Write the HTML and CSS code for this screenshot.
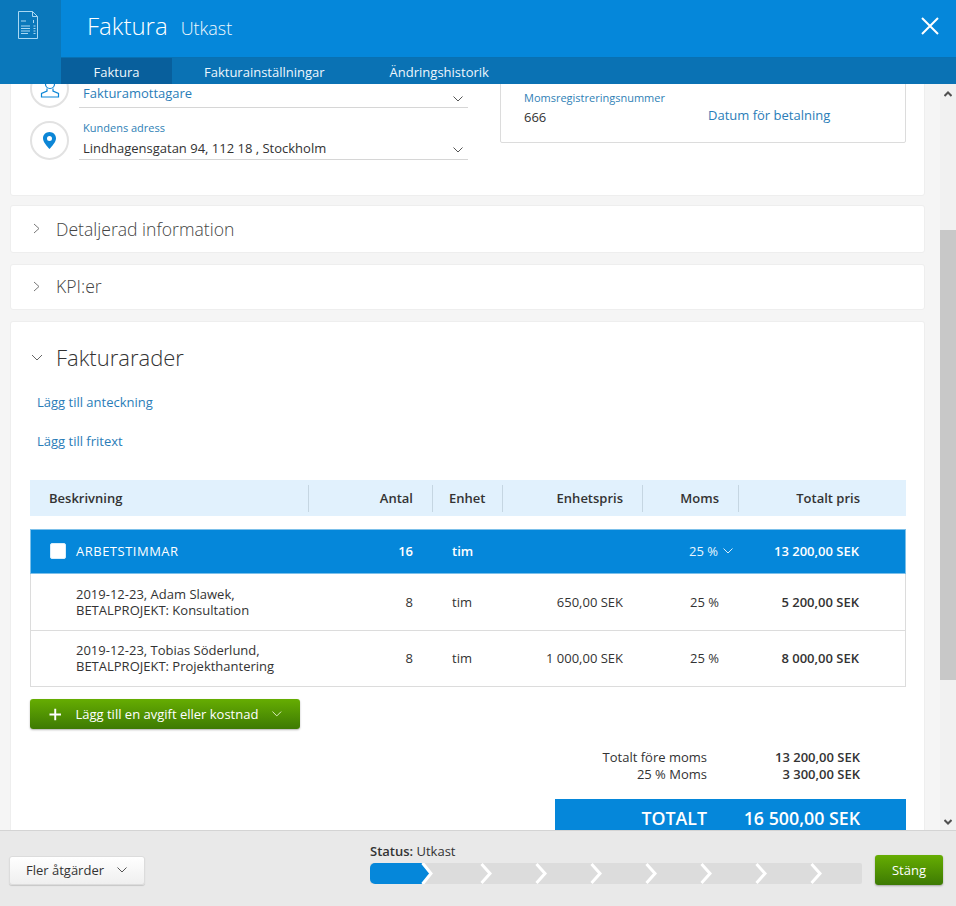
FILE: index.html
```html
<!DOCTYPE html>
<html lang="sv">
<head>
<meta charset="utf-8">
<title>Faktura</title>
<link rel="stylesheet" href="styles.css">
</head>
<body>
<div class="app">
  <header class="header">
    <div class="logo-cell">
      <svg class="doc-icon" width="22" height="30" viewBox="0 0 22 30" fill="none" stroke="#a9d8f3" stroke-width="1">
        <path d="M1.500 1.500H15.500L20.500 6.500V28.500H1.500Z"/>
        <path d="M15.500 1.500V6.500H20.500"/>
        <path d="M4 11H9M4 16H13M4 18.500H13M4 21H13M4 23.500H11M16.500 10V13M16.500 16H18.500M16.500 18.500H18.500M16.500 21H18.500M16.500 23.500H18.500"/>
      </svg>
    </div>
    <div class="header-main">
      <div class="title-row">
        <h1 class="title">Faktura</h1>
        <span class="subtitle">Utkast</span>
        <svg class="close" width="20" height="20" viewBox="0 0 20 20" stroke="#fff" stroke-width="2" fill="none"><path d="M2 2L18 18M18 2L2 18"/></svg>
      </div>
      <nav class="tabs">
        <a class="tab tab-active">Faktura</a>
        <a class="tab tab-mid">Fakturainställningar</a>
        <a class="tab tab-last">Ändringshistorik</a>
      </nav>
    </div>
  </header>

  <div class="middle">
    <main class="content">
      <section class="card card-first">
        <div class="customer">
          <div class="field-row">
            <span class="circle">
              <svg width="20" height="22" viewBox="0 0 20 22" fill="none" stroke="#0c86d6" stroke-width="1.200"><circle cx="10" cy="6" r="4.500"/><path d="M7 10.500V13L1.500 15.500V19H18.500V15.500L13 13V10.500"/></svg>
            </span>
            <div class="field">
              <div class="select-line select-plain"><span class="link-text">Fakturamottagare</span><svg class="chev" width="10" height="6" viewBox="0 0 10 6" fill="none" stroke="#555" stroke-width="1"><path d="M.5 .5L5 5L9.500 .5"/></svg></div>
            </div>
          </div>
          <div class="field-row field-row-2">
            <span class="circle">
              <svg width="13" height="17" viewBox="0 0 13 17"><path fill="#0c86d6" fill-rule="evenodd" d="M6.500 0C10.100 0 13 2.800 13 6.300C13 10.300 8.800 14.300 6.500 17C4.200 14.300 0 10.300 0 6.300C0 2.800 2.900 0 6.500 0ZM6.500 3.900A2.500 2.500 0 1 0 6.500 8.900A2.500 2.500 0 1 0 6.500 3.900Z"/></svg>
            </span>
            <div class="field">
              <div class="small-label field-label">Kundens adress</div>
              <div class="select-line"><span>Lindhagensgatan 94, 112 18 , Stockholm</span><svg class="chev" width="10" height="6" viewBox="0 0 10 6" fill="none" stroke="#555" stroke-width="1"><path d="M.5 .5L5 5L9.500 .5"/></svg></div>
            </div>
          </div>
        </div>
        <div class="info-box">
          <div class="vat">
            <div class="small-label">Momsregistreringsnummer</div>
            <div class="vat-value">666</div>
          </div>
          <a class="link-text pay-link">Datum för betalning</a>
        </div>
      </section>

      <section class="card card-collapsed card-details">
        <svg class="side-chev" width="7" height="11" viewBox="0 0 7 11" fill="none" stroke="#777" stroke-width="1"><path d="M1 1L6 5.500L1 10"/></svg>
        <h2 class="card-title">Detaljerad information</h2>
      </section>
      <section class="card card-collapsed card-kpi">
        <svg class="side-chev" width="7" height="11" viewBox="0 0 7 11" fill="none" stroke="#777" stroke-width="1"><path d="M1 1L6 5.500L1 10"/></svg>
        <h2 class="card-title">KPI:er</h2>
      </section>

      <section class="card card-lines">
        <div class="lines-head">
          <svg width="12" height="7" viewBox="0 0 12 7" fill="none" stroke="#666" stroke-width="1"><path d="M1 1L6 6L11 1"/></svg>
          <h2 class="lines-title">Fakturarader</h2>
        </div>
        <a class="link-text add-link add-link-1">Lägg till anteckning</a>
        <a class="link-text add-link add-link-2">Lägg till fritext</a>

        <div class="thead row-grid">
          <div class="th"><span class="th-in left">Beskrivning</span></div>
          <div class="th sep"><span class="th-in right">Antal</span></div>
          <div class="th sep"><span class="th-in enh">Enhet</span></div>
          <div class="th sep"><span class="th-in right">Enhetspris</span></div>
          <div class="th sep"><span class="th-in right">Moms</span></div>
          <div class="th sep"><span class="th-in total">Totalt pris</span></div>
        </div>

        <div class="group row-grid">
          <div class="cell desc-group"><span class="checkbox"></span><span class="group-name">ARBETSTIMMAR</span></div>
          <div class="cell num strong">16</div>
          <div class="cell unit strong">tim</div>
          <div class="cell"></div>
          <div class="cell vat-select">25 %<svg width="10" height="6" viewBox="0 0 10 6" fill="none" stroke="#d9eefb" stroke-width="1"><path d="M.5 .5L5 5L9.500 .5"/></svg></div>
          <div class="cell total strong">13 200,00 SEK</div>
        </div>

        <div class="line row-grid">
          <div class="cell desc">2019-12-23, Adam Slawek,<br>BETALPROJEKT: Konsultation</div>
          <div class="cell num">8</div>
          <div class="cell unit">tim</div>
          <div class="cell num">650,00 SEK</div>
          <div class="cell num">25 %</div>
          <div class="cell total strong">5 200,00 SEK</div>
        </div>
        <div class="line row-grid">
          <div class="cell desc">2019-12-23, Tobias Söderlund,<br>BETALPROJEKT: Projekthantering</div>
          <div class="cell num">8</div>
          <div class="cell unit">tim</div>
          <div class="cell num">1 000,00 SEK</div>
          <div class="cell num">25 %</div>
          <div class="cell total strong">8 000,00 SEK</div>
        </div>

        <button class="btn-green btn-add">
          <svg width="13" height="13" viewBox="0 0 13 13" stroke="#fff" stroke-width="2"><path d="M6.500 .5V12.500M.5 6.500H12.500"/></svg>
          <span>Lägg till en avgift eller kostnad</span>
          <svg width="10" height="6" viewBox="0 0 10 6" fill="none" stroke="#e4f2c8" stroke-width="1"><path d="M.5 .5L5 5L9.500 .5"/></svg>
        </button>

        <div class="sums">
          <div class="sum-row"><span class="sum-label">Totalt före moms</span><span class="sum-value">13 200,00 SEK</span></div>
          <div class="sum-row"><span class="sum-label">25 % Moms</span><span class="sum-value">3 300,00 SEK</span></div>
        </div>
        <div class="grand">
          <span class="grand-label">TOTALT</span><span class="grand-value">16 500,00 SEK</span>
        </div>
      </section>
    </main>

    <aside class="scrollbar">
      <svg class="arrow arrow-up" width="8" height="6" viewBox="0 0 8 6" fill="none" stroke="#505050" stroke-width="2"><path d="M.5 5L4 1.500L7.500 5"/></svg>
      <div class="thumb"></div>
      <svg class="arrow arrow-down" width="8" height="6" viewBox="0 0 8 6" fill="none" stroke="#505050" stroke-width="2"><path d="M.5 1L4 4.500L7.500 1"/></svg>
    </aside>
  </div>

  <footer class="footer">
    <button class="btn-more"><span>Fler åtgärder</span><svg width="10" height="6" viewBox="0 0 10 6" fill="none" stroke="#555" stroke-width="1"><path d="M.5 .5L5 5L9.500 .5"/></svg></button>
    <div class="status">
      <div class="status-text"><b>Status:</b> Utkast</div>
      <svg class="progress" width="492" height="21" viewBox="0 0 492 21">
        <rect width="492" height="21" rx="2" fill="#dcdcdc"/>
        <path d="M5 0H52L60 10.500L52 21H5A5 5 0 0 1 0 16V5A5 5 0 0 1 5 0Z" fill="#0587da"/>
        <g fill="none" stroke="#fff" stroke-width="3">
          <path d="M52.500 0L61 10.500L52.500 21"/>
          <path d="M111.500 1L120 10.500L111.500 20"/>
          <path d="M166.500 1L175 10.500L166.500 20"/>
          <path d="M221.500 1L230 10.500L221.500 20"/>
          <path d="M276.500 1L285 10.500L276.500 20"/>
          <path d="M331.500 1L340 10.500L331.500 20"/>
          <path d="M386.500 1L395 10.500L386.500 20"/>
          <path d="M441.500 1L450 10.500L441.500 20"/>
        </g>
      </svg>
    </div>
    <button class="btn-green btn-close">Stäng</button>
  </footer>
</div>
</body>
</html>
```

FILE: styles.css
```css
* { box-sizing: border-box; }
html, body { margin: 0; padding: 0; height: 100%; }
body {
  font-family: "Open Sans", "Noto Sans", sans-serif;
  font-size: 13px;
  color: #333;
  background: #f5f5f5;
  overflow: hidden;
}
h1, h2 { margin: 0; font-weight: 300; }
.app { width: 956px; height: 906px; display: flex; flex-direction: column; }

/* Header */
.header { height: 84px; flex: none; display: flex; background: #0075ba; position: relative; z-index: 2; }
.logo-cell { width: 61px; flex: none; padding: 10px 0 0 17px; background: #0a78bb; }
.doc-icon { display: block; }
.header-main { flex: 1; display: flex; flex-direction: column; }
.title-row { height: 58px; background: #0587da; display: flex; align-items: center; padding: 0 16px 5px 26px; color: #fff; border-bottom: 1px solid #0871b3; }
.title { font-size: 24px; font-weight: 300; line-height: 36px; color: #fff; }
.subtitle { font-size: 18px; font-weight: 300; margin-left: 13px; margin-top: 4px; color: #f0f8fd; }
.close { margin-left: auto; margin-top: -1px; }
.tabs { height: 26px; display: flex; background: #0a72b4; color: #fff; }
.tab { display: block; font-size: 13px; line-height: 28px; color: #eef7fd; }
.tab-active { width: 111px; text-align: center; background: #085f9c; }
.tab-mid { margin-left: 32px; }
.tab-last { margin-left: 65px; }

/* Middle */
.middle { flex: 1; min-height: 0; display: flex; overflow: hidden; }
.content { width: 940px; flex: none; padding: 0 15px 0 10px; overflow: hidden; }
.card { background: #fff; border: 1px solid #eeeeee; border-radius: 3px; }
.card-first { margin-top: -40px; height: 152px; display: flex; padding: 0 18px 0 19px; }
.customer { width: 437px; flex: none; padding-top: 25px; }
.field-row { display: flex; align-items: flex-end; gap: 10px; height: 38px; }
.field-row-2 { margin-top: 14px; }
.circle { width: 39px; height: 39px; flex: none; border-radius: 50%; border: 2px solid #e2e2e2; background: #fff; display: flex; align-items: center; justify-content: center; }
.field { width: 389px; flex: none; }
.small-label { font-size: 11px; line-height: 15px; color: #2f7fb6; }
.field-label { padding-left: 4px; margin-bottom: 2px; }
.select-line { display: flex; justify-content: space-between; align-items: center; height: 23px; border-bottom: 1px solid #d6d6d6; padding: 0 5px 0 4px; font-size: 13px; }
.select-plain { height: 21px; }
.select-plain .link-text { margin-top: -8px; }
.chev { margin-top: 3px; }
.link-text { color: #2a7db8; font-size: 13px; }
.info-box { margin-left: 33px; width: 406px; height: 98px; border: 1px solid #dcdcdc; border-radius: 2px; display: flex; padding: 44px 0 0 23px; }
.vat { width: 184px; }
.vat-value { margin-top: 2px; font-size: 13px; line-height: 20px; }
.pay-link { margin-top: 16px; }

.card-collapsed { display: flex; align-items: center; padding-left: 22px; }
.card-details { height: 48px; margin-top: 9px; padding-bottom: 1px; }
.card-kpi { height: 46px; margin-top: 11px; padding-bottom: 2px; }
.card-title { font-size: 17.600px; font-weight: 300; color: #444; margin-left: 16px; }

.card-lines { margin-top: 11px; height: 600px; padding: 0 18px 0 19px; position: relative; }
.lines-head { display: flex; align-items: center; height: 70px; padding-left: 1px; margin-bottom: 1px; }
.lines-title { font-size: 22px; font-weight: 300; color: #333; margin-left: 13px; }
.add-link { display: block; margin-left: 7px; line-height: 18px; }
.add-link-1 { margin-top: 0; }
.add-link-2 { margin-top: 21px; }

.row-grid { display: grid; grid-template-columns: 278px 124px 70px 140px 96px 168px; width: 876px; }
.thead { margin-top: 30px; height: 36px; background: #e1f1fd; align-items: center; font-weight: 600; color: #333; }
.th { height: 27px; display: flex; align-items: center; }
.th.sep { border-left: 1px solid #c5d6e2; }
.th-in { flex: 1; }
.th-in.left { padding-left: 19px; }
.th-in.right { text-align: right; padding-right: 19px; }
.th-in.enh { padding-left: 16px; }
.th-in.total { text-align: right; padding-right: 46px; }

.group { margin-top: 13px; height: 45px; padding-bottom: 1px; background: #0587da; border: 1px solid #7cc0ea; color: #fff; align-items: center; }
.cell { line-height: 16px; }
.desc-group { display: flex; align-items: center; gap: 10px; padding-left: 19px; font-size: 13px; }
.group-name { letter-spacing: .5px; }
.checkbox { width: 16px; height: 16px; background: #fff; border-radius: 2px; border: 1px solid #d9eefb; }
.num { text-align: right; padding-right: 20px; }
.unit { padding-left: 19px; }
.total { text-align: right; padding-right: 48px; }
.strong { font-weight: 600; }
.vat-select { display: flex; align-items: center; justify-content: flex-end; gap: 5px; padding-right: 6px; color: #e8f5fd; }
.line { height: 56.500px; align-items: center; border: 1px solid #dcdcdc; border-top: 0; }
.desc { padding-left: 45px; }

.btn-green {
  font-family: inherit;
  color: #fff;
  background: linear-gradient(#66ad02, #3d7a03);
  border: 0;
  border-radius: 3px;
  box-shadow: 0 1px 2px rgba(0,0,0,.3);
  font-size: 13px;
}
.btn-add { margin-top: 12px; width: 270px; height: 30px; display: flex; align-items: center; padding: 0 18px 0 19px; }
.btn-add span { margin-left: 14px; margin-right: 14px; white-space: nowrap; }
.sums { margin-top: 20px; }
.sum-row { display: flex; justify-content: flex-end; line-height: 17px; padding-right: 46px; }
.sum-label { text-align: right; }
.sum-value { width: 153px; text-align: right; font-weight: 600; }
.grand { margin: 16px 0 0 525px; width: 351px; height: 60px; background: #0587da; color: #fff; font-weight: 600; font-size: 17.800px; display: flex; justify-content: flex-end; padding: 7px 46px 0 0; line-height: 24px; }
.grand-value { width: 153px; text-align: right; }

/* Scrollbar */
.scrollbar { width: 16px; flex: none; background: #f1f1f1; position: relative; display: flex; flex-direction: column; }
.arrow { position: absolute; left: 4px; }
.arrow-up { top: 7px; }
.arrow-down { bottom: 5px; }
.thumb { margin-top: 146px; height: 450px; background: #c8c8c8; }

/* Footer */
.footer { height: 76px; flex: none; background: #e9e9e9; border-top: 1px solid #d4d4d4; position: relative; z-index: 2; display: flex; padding: 0 13px 0 9px; }
.btn-more { margin-top: 25px; width: 136px; height: 29px; font-family: inherit; font-size: 13px; color: #333; background: linear-gradient(#fff, #efefef); border: 1px solid #dcdcdc; border-radius: 3px; box-shadow: 0 1px 1px rgba(0,0,0,.15); display: flex; align-items: center; gap: 13px; padding: 0 0 2px 16px; }
.status { margin-left: 225px; width: 492px; padding-top: 11px; }
.status-text { font-size: 13px; line-height: 18px; }
.status-text b { font-weight: 600; }
.progress { display: block; margin-top: 3px; }
.btn-close { margin-left: 13px; margin-top: 24px; width: 68px; height: 30px; }
```
